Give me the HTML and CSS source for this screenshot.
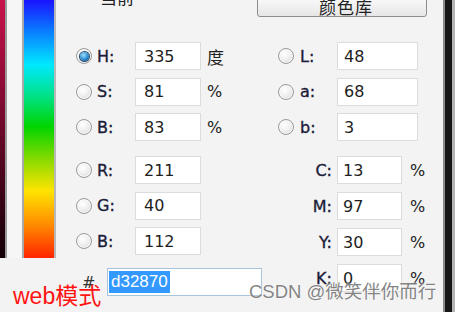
FILE: index.html
```html
<!DOCTYPE html>
<html>
<head>
<meta charset="utf-8">
<link rel="stylesheet" href="styles.css">
</head>
<body>
<div class="page">
  <div class="side">
    <div class="field"></div>
    <div class="gap"></div>
    <div class="hue"></div>
  </div>
  <div class="main">
    <div class="top">
      <span class="current">当前</span>
      <button class="lib">颜色库</button>
    </div>
    <div class="form">
      <div class="col">
        <div class="group">
          <div class="row"><span class="radio on"></span><span class="lbl">H:</span><span class="inp">335</span><span class="unit cjk">度</span></div>
          <div class="row"><span class="radio"></span><span class="lbl">S:</span><span class="inp">81</span><span class="unit">%</span></div>
          <div class="row"><span class="radio"></span><span class="lbl">B:</span><span class="inp">83</span><span class="unit">%</span></div>
        </div>
        <div class="group">
          <div class="row"><span class="radio"></span><span class="lbl">R:</span><span class="inp">211</span></div>
          <div class="row"><span class="radio"></span><span class="lbl">G:</span><span class="inp">40</span></div>
          <div class="row"><span class="radio"></span><span class="lbl">B:</span><span class="inp">112</span></div>
        </div>
        <div class="row hex"><span class="hash">#</span><span class="inp wide"><span class="sel">d32870</span></span></div>
      </div>
      <div class="col rcol">
        <div class="group">
          <div class="row"><span class="radio"></span><span class="lbl r">L:</span><span class="inp lab">48</span></div>
          <div class="row"><span class="radio"></span><span class="lbl r">a:</span><span class="inp lab">68</span></div>
          <div class="row"><span class="radio"></span><span class="lbl r">b:</span><span class="inp lab">3</span></div>
        </div>
        <div class="group cmyk">
          <div class="row"><span class="lbl c">C:</span><span class="inp cm">13</span><span class="unit u2">%</span></div>
          <div class="row"><span class="lbl c">M:</span><span class="inp cm">97</span><span class="unit u2">%</span></div>
          <div class="row"><span class="lbl c">Y:</span><span class="inp cm">30</span><span class="unit u2">%</span></div>
          <div class="row"><span class="lbl c">K:</span><span class="inp cm">0</span><span class="unit u2">%</span></div>
        </div>
      </div>
    </div>
  </div>
  <div class="frame"><span class="f1"></span><span class="f2"></span><span class="f3"></span></div>
  <div class="mark">CSDN @微笑伴你而行</div>
  <div class="web">web模式</div>
</div>
</body>
</html>
```
FILE: styles.css
```css
* { box-sizing: border-box; }
html, body { margin: 0; padding: 0; }
body {
  width: 455px;
  height: 312px;
  overflow: hidden;
  background: #f2f2f2;
  font-family: "DejaVu Sans", "Noto Sans CJK SC", sans-serif;
}
.page {
  position: relative;
  display: flex;
  width: 455px;
  height: 312px;
  background: #f3f3f3;
}
.side {
  display: flex;
  height: 258px;
  align-self: flex-start;
}
.field {
  width: 7px;
  border-right: 2px solid #9a9a9a;
  background: linear-gradient(to bottom, #c8124c 0%, #8a0a34 35%, #3c0418 75%, #120006 100%);
}
.gap {
  width: 15px;
  background: #f6f6f6;
}
.hue {
  width: 34px;
  border-left: 2px solid #a8a8a8;
  border-right: 2px solid #b8b8b8;
  background: linear-gradient(to bottom, #1a12ff 0%, #0a7cff 12%, #00e8ff 25%, #00e28a 37%, #00d400 49%, #8ada00 62%, #ffe400 74%, #ff8c00 87%, #ff2400 100%);
}
.main {
  flex: 1;
  display: flex;
  flex-direction: column;
}
.top {
  display: flex;
  justify-content: space-between;
  height: 17px;
  padding: 0 16px 0 44px;
}
.current {
  font-family: "Noto Sans CJK SC", sans-serif;
  font-size: 17px;
  line-height: 17px;
  margin-top: -12px;
  color: #222;
}
.lib {
  width: 170px;
  height: 21px;
  margin-top: -4px;
  padding: 0 0 0 8px;
  border: 1px solid #8c8c8c;
  border-radius: 3px;
  background: linear-gradient(to bottom, #fbfbfb, #e6e6e6);
  font-family: "Noto Sans CJK SC", sans-serif;
  font-size: 17px;
  line-height: 18px;
  color: #222;
  letter-spacing: 1px;
}
.form {
  display: grid;
  grid-template-columns: 202px 1fr;
  padding: 25px 0 0 20px;
}
.col {
  display: flex;
  flex-direction: column;
  gap: 15px;
}
.group {
  display: flex;
  flex-direction: column;
  gap: 7.5px;
}
.group.cmyk { gap: 8px; }
.col > .hex { margin-top: -2px; }
.row {
  display: flex;
  align-items: center;
  height: 28px;
  font-size: 16px;
  color: #222;
}
.radio {
  width: 16px;
  height: 16px;
  border-radius: 50%;
  border: 1px solid #9a9a9a;
  background: radial-gradient(circle at 40% 35%, #ffffff 0%, #f0f0f0 45%, #cfcfcf 100%);
  box-shadow: inset 0 0 0 1px #fafafa;
  margin-right: 5px;
  position: relative;
}
.radio.on::after {
  content: "";
  position: absolute;
  left: 2.5px;
  top: 2.5px;
  width: 9px;
  height: 9px;
  border-radius: 50%;
  background: radial-gradient(circle at 40% 35%, #9fe0ff 0%, #2a8ad0 55%, #0c3f70 100%);
  box-shadow: 0 0 0 1px #2a4a66;
}
.lbl {
  width: 38px;
  color: #1c1c38;
  -webkit-text-stroke: 0.35px #1c1c38;
}
.lbl.r { width: 37px; margin-left: 1px; }
.lbl.c {
  width: 55px;
  text-align: right;
  padding-right: 1px;
  margin-right: 4px;
}
.inp {
  display: flex;
  align-items: center;
  width: 66px;
  height: 28px;
  padding-left: 8px;
  background: #fff;
  border: 1px solid #dcdcdc;
  color: #1e1e1e;
}
.inp.lab { width: 81px; padding-left: 6px; }
.inp.cm { width: 65px; padding-left: 5px; }
.inp.wide {
  width: 155px;
  padding-left: 1px;
  border-color: #a8c4dc;
}
.sel {
  background: #3399ff;
  color: #fff;
  padding: 1px 2px;
  line-height: 20px;
  font-family: "Liberation Sans", sans-serif;
  font-size: 17px;
}
.unit {
  margin-left: 6px;
  color: #222;
}
.unit.cjk {
  font-family: "Noto Sans CJK SC", sans-serif;
  font-size: 17px;
}
.unit.u2 { margin-left: 8px; }
.hash {
  width: 31px;
  padding-left: 6px;
  color: #333;
}
.frame {
  display: flex;
  width: 12px;
  height: 312px;
}
.f1 { width: 2px; background: #8a8a8a; }
.f2 { width: 7px; background: #161616; }
.f3 { width: 3px; background: #b4b4b4; }
.mark {
  position: absolute;
  left: 249px;
  top: 282px;
  font-family: "Liberation Sans", "Noto Sans CJK SC", sans-serif;
  font-size: 18.5px;
  line-height: 20px;
  color: rgba(110, 110, 110, 0.85);
  text-shadow: 0 0 2px rgba(255, 255, 255, 0.8);
  white-space: nowrap;
}
.web {
  position: absolute;
  left: 13px;
  top: 284px;
  font-family: "Liberation Sans", "Noto Sans CJK SC", sans-serif;
  font-size: 23px;
  line-height: 24px;
  color: #ff1414;
  white-space: nowrap;
}
```
